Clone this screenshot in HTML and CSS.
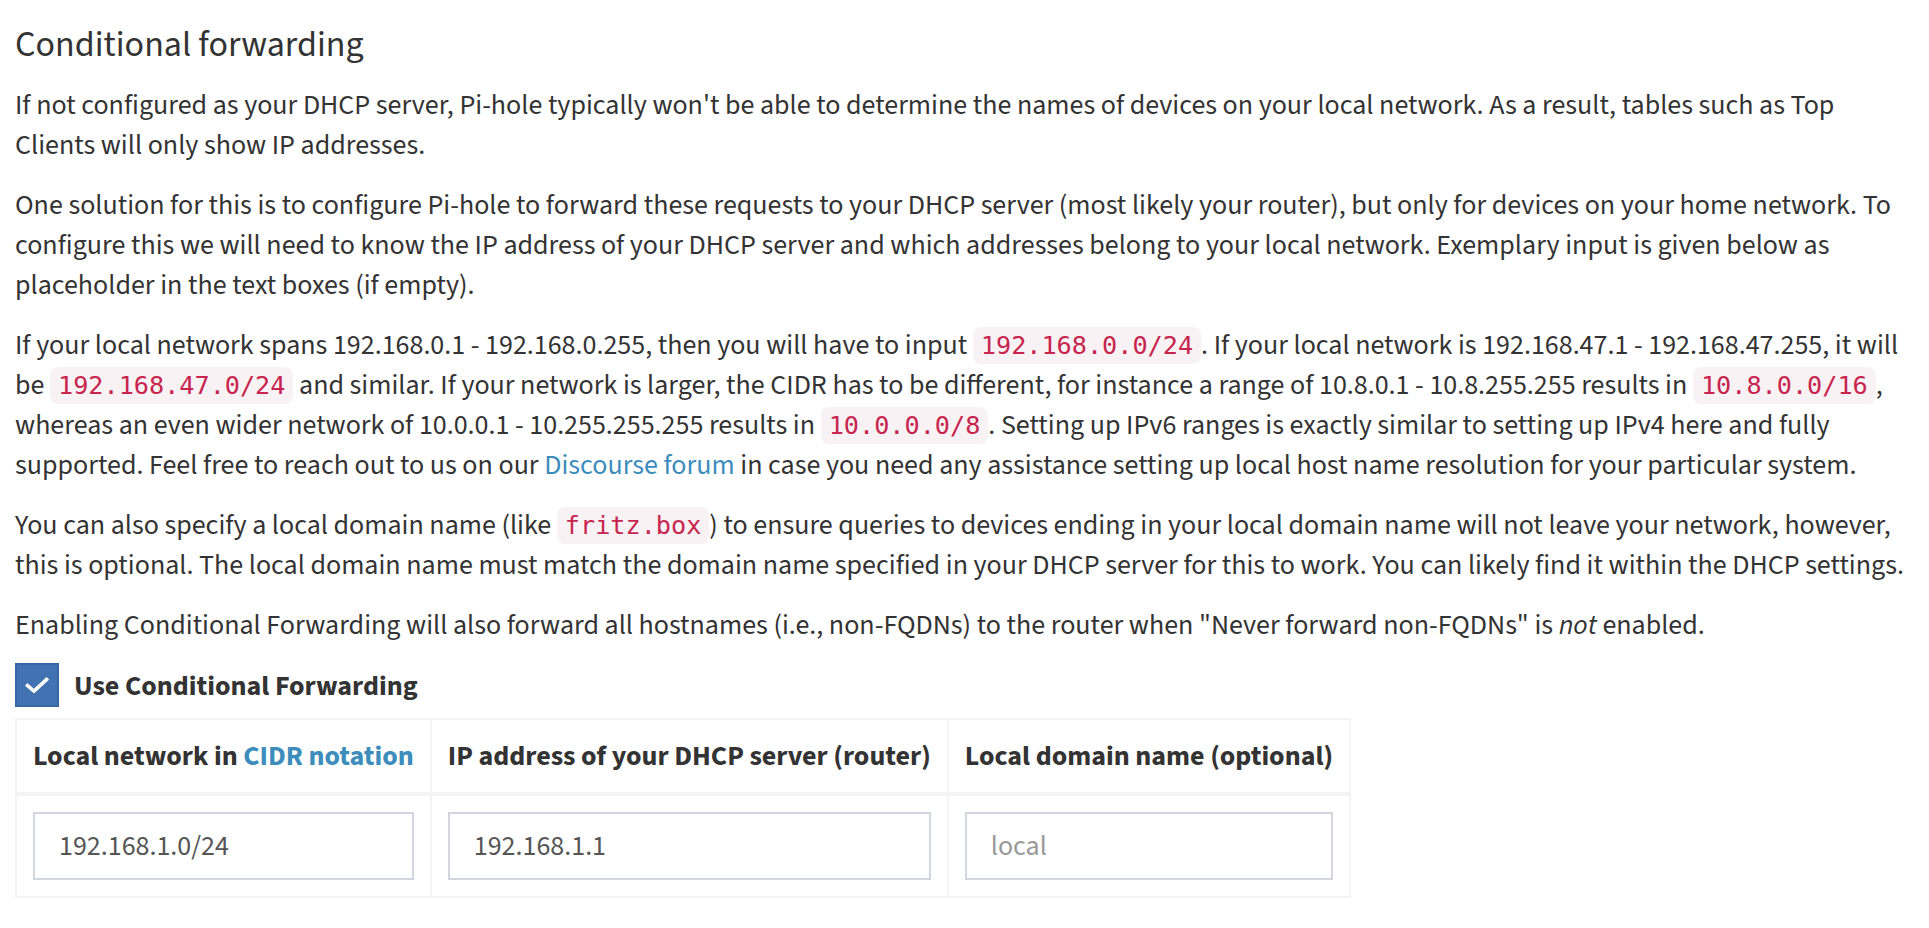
FILE: index.html
```html
<!DOCTYPE html>
<html lang="en">
<head>
<meta charset="utf-8">
<title>Conditional forwarding</title>
<link rel="stylesheet" href="styles.css">
</head>
<body>
<div class="box">
  <h3 class="box-title">Conditional forwarding</h3>
  <p>If not configured as your DHCP server, Pi-hole typically won't be able to determine the names of devices on your local network. As a result, tables such as Top Clients will only show IP addresses.</p>
  <p>One solution for this is to configure Pi-hole to forward these requests to your DHCP server (most likely your router), but only for devices on your home network. To configure this we will need to know the IP address of your DHCP server and which addresses belong to your local network. Exemplary input is given below as placeholder in the text boxes (if empty).</p>
  <p>If your local network spans 192.168.0.1 - 192.168.0.255, then you will have to input <code>192.168.0.0/24</code>. If your local network is 192.168.47.1 - 192.168.47.255, it will be&nbsp;<code>192.168.47.0/24</code> and similar. If your network is larger, the CIDR has to be different, for instance a range of 10.8.0.1 - 10.8.255.255 results in <code>10.8.0.0/16</code>, whereas an even wider network of 10.0.0.1 - 10.255.255.255 results in <code>10.0.0.0/8</code>. Setting up IPv6 ranges is exactly similar to setting up IPv4 here and fully supported. Feel free to reach out to us on our <a href="#">Discourse forum</a> in case you need any assistance setting up local host name resolution for your particular system.</p>
  <p>You can also specify a local domain name (like <code>fritz.box</code>) to ensure queries to devices ending in your local domain name will not leave your network, however, this is optional. The local domain name must match the domain name specified in your DHCP server for this to work. You can likely find it within the DHCP settings.</p>
  <p class="last">Enabling Conditional Forwarding will also forward all hostnames (i.e., non-FQDNs) to the router when "Never forward non-FQDNs" is <em>not</em> enabled.</p>
  <label class="check-row">
    <span class="check-box">
      <svg width="24" height="17" viewBox="0 0 24 17"><path d="M2.5 8.5 L9 14 L21.5 2.5" fill="none" stroke="#fff" stroke-width="3.6" stroke-linecap="square"/></svg>
    </span>
    <span class="check-label">Use Conditional Forwarding</span>
  </label>
  <table class="cf-table">
    <thead>
      <tr>
        <th>Local network in <a href="#">CIDR notation</a></th>
        <th>IP address of your DHCP server (router)</th>
        <th>Local domain name (optional)</th>
      </tr>
    </thead>
    <tbody>
      <tr>
        <td><input class="form-control" type="text" size="1" value="192.168.1.0/24"></td>
        <td><input class="form-control" type="text" size="1" value="192.168.1.1"></td>
        <td><input class="form-control" type="text" size="1" placeholder="local"></td>
      </tr>
    </tbody>
  </table>
</div>
</body>
</html>
```
FILE: styles.css
```css
html, body {
  margin: 0;
  background: #fff;
}
body {
  font-family: "Source Sans 3", "Source Sans Pro", Lato, "Liberation Sans", sans-serif;
  font-size: 28px;
  line-height: 40px;
  color: #333;
}
.box {
  padding: 25px 15px 30px 15px;
}
.box-title {
  margin: 0 0 20px 0;
  font-size: 36px;
  line-height: 40px;
  font-weight: 400;
  color: #333;
}
p {
  margin: 0 0 20px 0;
}
p.last {
  margin-bottom: 18px;
}
a {
  color: #3c8dbc;
  text-decoration: none;
}
code {
  font-family: "DejaVu Sans Mono", "Liberation Mono", monospace;
  font-size: 25.2px;
  line-height: 1;
  padding: 4px 8px;
  border-radius: 8px;
  color: #c7254e;
  background: #f9f2f4;
}
.check-row {
  display: flex;
  align-items: center;
  gap: 15px;
  height: 44px;
  margin: 0 0 11px 0;
}
.check-box {
  width: 44px;
  height: 44px;
  box-sizing: border-box;
  background: #4272b2;
  border: 2px solid #3865a3;
  display: flex;
  align-items: center;
  justify-content: center;
}
.check-box svg {
  display: block;
  margin-top: 1px;
}
.check-label {
  font-weight: 700;
  margin-top: 2px;
}
.cf-table {
  border-collapse: collapse;
  border: 2px solid #f4f4f4;
}
.cf-table th,
.cf-table td {
  border: 2px solid #f4f4f4;
  padding: 16px;
  text-align: left;
  vertical-align: top;
}
.cf-table th {
  font-weight: 700;
  white-space: nowrap;
  vertical-align: bottom;
  border-bottom-width: 4px;
}
.form-control {
  display: block;
  width: 100%;
  height: 68px;
  box-sizing: border-box;
  padding: 12px 24px;
  border: 2px solid #d2d6de;
  border-radius: 0;
  font-family: inherit;
  font-size: 28px;
  color: #555;
  background: #fff;
  outline: none;
}
.form-control::placeholder {
  color: #999;
}
```
